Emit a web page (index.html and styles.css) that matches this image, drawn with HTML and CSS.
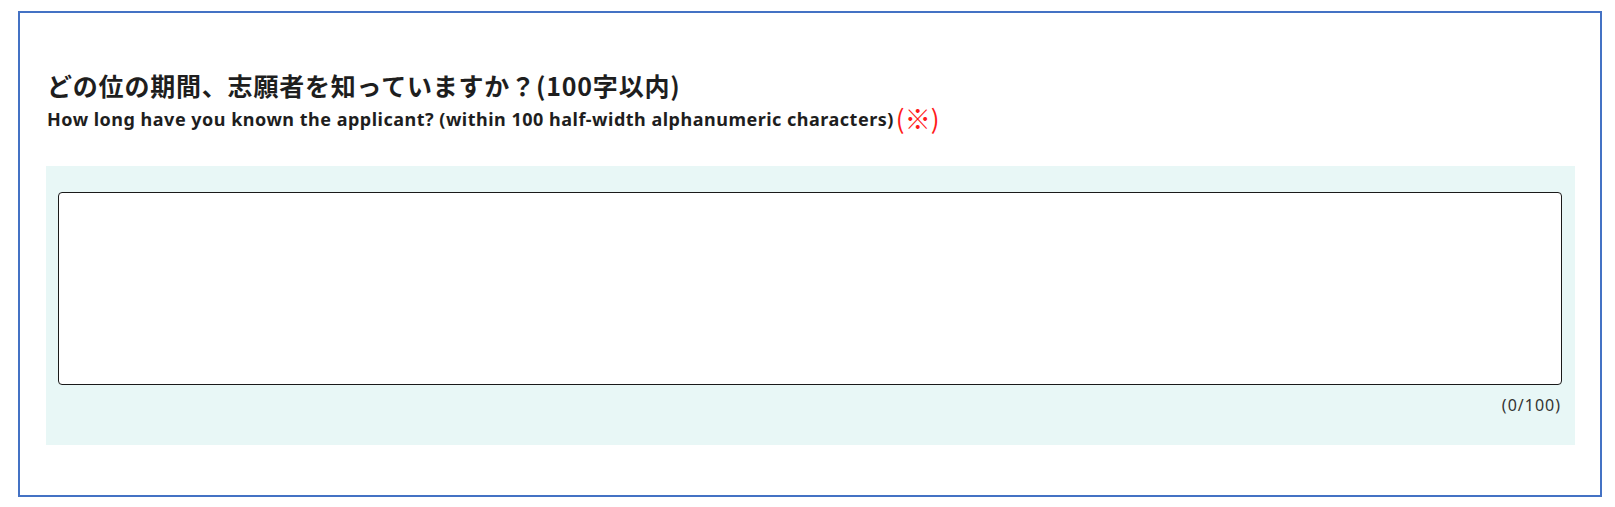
FILE: index.html
```html
<!DOCTYPE html>
<html lang="ja">
<head>
<meta charset="utf-8">
<title>Form</title>
<link rel="stylesheet" href="styles.css">
</head>
<body>
<div class="card">
  <h2 class="q-ja">どの位の期間、志願者を知っていますか？(100字以内)</h2>
  <p class="q-en">How long have you known the applicant? (within 100 half-width alphanumeric characters)<span class="req">(※)</span></p>
  <div class="field">
    <textarea class="answer"></textarea>
    <div class="counter">(0/100)</div>
  </div>
</div>
</body>
</html>
```

FILE: styles.css
```css
html, body {
  margin: 0;
  padding: 0;
  background: #ffffff;
}
body {
  font-family: "Noto Sans CJK JP", "Noto Sans", sans-serif;
  color: #1e1e1e;
}
.card {
  margin: 11px 0 0 18px;
  width: 1584px;
  height: 486px;
  border: 2px solid #4472c4;
  box-sizing: border-box;
  padding: 56px 25px 0 26px;
}
.q-ja {
  margin: 0 0 0 1px;
  font-size: 25px;
  line-height: 32px;
  font-weight: 700;
  letter-spacing: 0.8px;
}
.q-en {
  margin: 7px 0 0 1px;
  font-size: 18px;
  line-height: 22px;
  font-weight: 700;
  letter-spacing: 0.5px;
  font-family: "Noto Sans", "Noto Sans CJK JP", sans-serif;
}
.req {
  color: #ff1a1a;
  font-family: "Noto Sans CJK JP", sans-serif;
  font-weight: 400;
  font-size: 26px;
  line-height: 0;
  letter-spacing: 0;
  vertical-align: -3px;
  margin-left: 2px;
}
.field {
  margin-top: 36px;
  background: #e8f7f6;
  padding: 26px 13px 0 12px;
  height: 279px;
  box-sizing: border-box;
}
.answer {
  display: block;
  width: 100%;
  height: 193px;
  box-sizing: border-box;
  border: 1px solid #1a1a1a;
  border-radius: 4px;
  background: #ffffff;
  resize: none;
  margin: 0;
  padding: 6px 8px;
  font-family: "Noto Sans CJK JP", sans-serif;
}
.counter {
  text-align: right;
  font-family: "Noto Sans", sans-serif;
  font-size: 16px;
  line-height: 22px;
  letter-spacing: 1px;
  margin-top: 9px;
  padding-right: 1px;
  color: #333333;
}
```
